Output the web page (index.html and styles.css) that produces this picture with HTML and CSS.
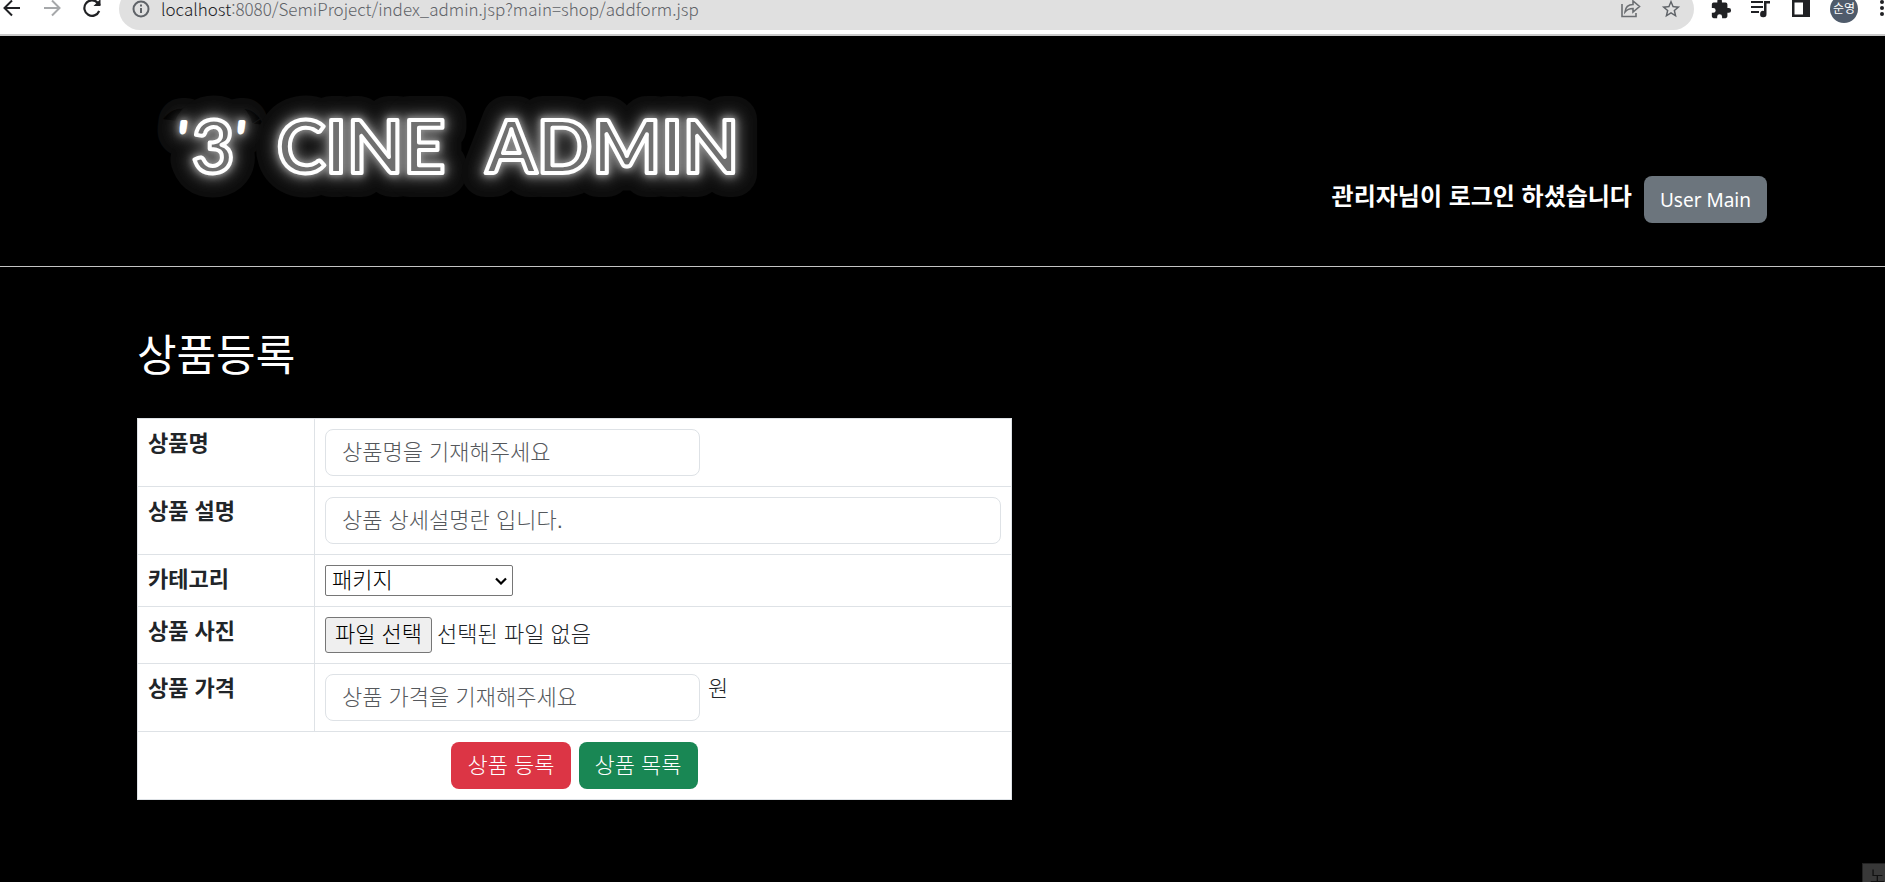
FILE: index.html
```html
<!DOCTYPE html>
<html lang="ko">
<head>
<meta charset="utf-8">
<title>상품등록</title>
<link rel="stylesheet" href="styles.css">
</head>
<body>
<div class="browser-bar">
  <nav class="browser-nav">
    <button class="icon-btn" type="button" aria-label="뒤로"><svg width="24" height="24" viewBox="0 0 24 24" fill="none" stroke="#202124" stroke-width="2"><path d="M20 11H5M12 3.500 4.500 11l7.500 7.500"/></svg></button>
    <button class="icon-btn" type="button" aria-label="앞으로"><svg width="24" height="24" viewBox="0 0 24 24" fill="none" stroke="#a6a8aa" stroke-width="2"><path d="M4 11h15M12 3.500l7.500 7.500-7.500 7.500"/></svg></button>
    <button class="icon-btn" type="button" aria-label="새로고침"><svg width="24" height="24" viewBox="0 0 24 24" fill="none" stroke="#202124" stroke-width="2.200"><path d="M19.200 14A7.700 7.700 0 1 1 17.500 5.600L20 8"/><path d="M20.500 2v7h-7z" fill="#202124" stroke="none"/></svg></button>
  </nav>
  <div class="address">
    <svg width="20" height="20" viewBox="0 0 20 20" fill="none" stroke="#5f6368" stroke-width="2"><circle cx="10" cy="10" r="7.500"/><path d="M10 9v5M10 5.500v2"/></svg>
    <span class="url"><span class="host">localhost</span>:8080/SemiProject/index_admin.jsp?main=shop/addform.jsp</span>
    <button class="icon-btn" type="button" aria-label="공유"><svg width="22" height="22" viewBox="0 0 22 22" fill="none" stroke="#6b6e72" stroke-width="1.600"><path d="M2 6v12.500h14V15"/><path d="M5 14c.5-5 3-7.500 8-7.500V3l6.500 5.500L13 14v-3.500c-4 0-6 1-8 3.500z"/></svg></button>
    <button class="icon-btn" type="button" aria-label="북마크"><svg width="22" height="22" viewBox="0 0 24 24" fill="#5f6368"><path d="M22 9.240l-7.190-.62L12 2 9.190 8.630 2 9.240l5.460 4.730L5.820 21 12 17.270 18.180 21l-1.630-7.030L22 9.240zM12 15.400l-3.760 2.270 1-4.280-3.320-2.880 4.380-.38L12 6.100l1.710 4.040 4.380.38-3.320 2.880 1 4.280L12 15.400z"/></svg></button>
  </div>
  <div class="browser-tools">
    <button class="icon-btn" type="button" aria-label="확장 프로그램"><svg width="22" height="22" viewBox="0 0 24 24" fill="#202124"><path d="M20.500 11H19V7a2 2 0 0 0-2-2h-4V3.500a2.500 2.500 0 0 0-5 0V5H4a2 2 0 0 0-2 2v3.800h1.500a2.700 2.700 0 0 1 0 5.400H2V20a2 2 0 0 0 2 2h3.800v-1.500a2.700 2.700 0 0 1 5.400 0V22H17a2 2 0 0 0 2-2v-4h1.500a2.500 2.500 0 0 0 0-5z"/></svg></button>
    <button class="icon-btn" type="button" aria-label="미디어"><svg width="22" height="22" viewBox="0 0 22 22"><path d="M1 4h12M1 9h12M1 14h8" stroke="#202124" stroke-width="2"/><path d="M14 13V3h6v2.500h-3.500V16a3.200 3.200 0 1 1-2.500-3z" fill="#202124"/></svg></button>
    <button class="icon-btn" type="button" aria-label="사이드 패널"><svg width="22" height="22" viewBox="0 0 22 22"><path d="M2 2h18v17H2zM4.500 4.500v12H13v-12z" fill="#202124" fill-rule="evenodd"/></svg></button>
    <button class="avatar" type="button">순영</button>
    <button class="icon-btn menu-dots" type="button" aria-label="메뉴"><svg width="6" height="22" viewBox="0 0 6 22" fill="#202124"><circle cx="3" cy="4" r="2"/><circle cx="3" cy="10" r="2"/><circle cx="3" cy="16" r="2"/></svg></button>
  </div>
</div>

<header class="site-header">
  <svg class="logo" width="602" height="105" viewBox="0 0 602 105" role="img" aria-label="'3' CINE ADMIN">
    <defs>
      <filter id="glow-wide" x="-10%" y="-50%" width="120%" height="200%"><feGaussianBlur stdDeviation="7"/></filter>
      <filter id="glow-near" x="-10%" y="-50%" width="120%" height="200%"><feGaussianBlur stdDeviation="3"/></filter>
    </defs>
    <g class="logo-halo"><use href="#logo-word"/></g>
    <g class="logo-glow-wide"><use href="#logo-word"/></g>
    <g class="logo-glow-near"><use href="#logo-word"/></g>
    <g class="logo-tube">
      <g id="logo-word">
        <text class="logo-quote" x="13" y="57">'</text>
        <text x="27" y="79">3</text>
        <text class="logo-quote" x="71" y="57">'</text>
        <text x="112" y="79">CINE</text>
        <text x="321" y="79">ADMIN</text>
      </g>
    </g>
  </svg>
  <div class="account">
    <b class="greeting">관리자님이 로그인 하셨습니다</b>
    <button class="btn btn-secondary" type="button">User Main</button>
  </div>
</header>

<main class="content">
  <h1>상품등록</h1>
  <form>
    <table class="product-table">
      <tbody>
        <tr>
          <th scope="row"><label for="name">상품명</label></th>
          <td><input class="field field-short" id="name" type="text" placeholder="상품명을 기재해주세요"></td>
        </tr>
        <tr>
          <th scope="row"><label for="detail">상품 설명</label></th>
          <td><input class="field" id="detail" type="text" placeholder="상품 상세설명란 입니다."></td>
        </tr>
        <tr>
          <th scope="row"><label for="category">카테고리</label></th>
          <td>
            <div class="category-box">
              <select class="category" id="category"><option>패키지</option></select>
              <svg class="category-arrow" width="12" height="8" viewBox="0 0 12 8" fill="none" stroke="#000" stroke-width="2.200"><path d="M1 1.500l5 5 5-5"/></svg>
            </div>
          </td>
        </tr>
        <tr>
          <th scope="row">상품 사진</th>
          <td>
            <div class="file-row">
              <input class="file-input" id="photo" type="file">
              <label class="file-button" for="photo">파일 선택</label>
              <span>선택된 파일 없음</span>
            </div>
          </td>
        </tr>
        <tr>
          <th scope="row"><label for="price">상품 가격</label></th>
          <td>
            <div class="price-row">
              <input class="field field-short" id="price" type="text" placeholder="상품 가격을 기재해주세요">
              <span>원</span>
            </div>
          </td>
        </tr>
        <tr>
          <td colspan="2">
            <div class="actions">
              <button class="btn btn-danger" type="submit">상품 등록</button>
              <button class="btn btn-success" type="button">상품 목록</button>
            </div>
          </td>
        </tr>
      </tbody>
    </table>
  </form>
</main>
<div class="corner-tip">노</div>
</body>
</html>
```
FILE: styles.css
```css
* { box-sizing: border-box; }

body {
  margin: 0;
  background: #000;
  color: #212529;
  font: 300 22px/30px "Liberation Sans", "Noto Sans CJK KR", sans-serif;
}

button, input, select { font: inherit; }

/* browser toolbar */
.browser-bar {
  display: flex;
  height: 36px;
  overflow: hidden;
  background: #fff;
  border-bottom: 2px solid #c9c9c9;
}

.browser-nav,
.address,
.browser-tools {
  display: flex;
  align-items: center;
  height: 42px;
  margin-top: -12px;
  flex: none;
}

.browser-nav { width: 119px; gap: 16px; }

.icon-btn {
  display: flex;
  padding: 0;
  border: 0;
  background: none;
}

.address {
  flex: 1;
  min-width: 0;
  gap: 18px;
  padding: 0 12px;
  border-radius: 21px;
  background: #e0e0e0;
}

.url {
  flex: 1;
  min-width: 0;
  margin-left: -8px;
  white-space: nowrap;
  color: #5f6368;
  font-family: "Liberation Sans", "Noto Sans CJK KR", sans-serif;
  font-family: "Noto Sans CJK KR", sans-serif;
  font-size: 17px;
  line-height: 18px;
}

.host { color: #202124; }

.browser-tools { padding-left: 16px; gap: 18px; }
.menu-dots { margin-left: 3px; }

.avatar {
  width: 28px;
  height: 28px;
  padding: 0;
  border: 0;
  border-radius: 50%;
  background: #4f5b6b;
  color: #fff;
  font-size: 12px;
  font-weight: 400;
  line-height: 26px;
}

/* site header */
.site-header {
  display: flex;
  justify-content: space-between;
  padding: 58px 118px 43px 165px;
  border-bottom: 1px solid #c4c4c4;
}

.logo { overflow: visible; flex: none; }

.logo text {
  font-family: Lato, sans-serif;
  font-size: 73px;
  font-weight: 700;
}

.logo .logo-quote {
  font-size: 40px;
  font-style: italic;
  font-weight: 400;
}

.logo g { stroke-linejoin: round; }
.logo-halo { fill: #0d0d0d; stroke: #0d0d0d; stroke-width: 48px; }
.logo-glow-wide { fill: #666; stroke: #666; stroke-width: 12px; filter: url(#glow-wide); }
.logo-glow-near { fill: #888; stroke: #999; stroke-width: 5px; filter: url(#glow-near); }
.logo-tube { fill: #707070; stroke: #fff; stroke-width: 4px; }

.account {
  display: flex;
  align-items: flex-end;
  gap: 12px;
  margin-top: 82px;
  height: 47px;
}

.greeting {
  color: #fff;
  font-size: 24px;
  font-weight: 700;
  line-height: 52px;
}

.btn {
  height: 47px;
  padding: 0 16px;
  border: 0;
  border-radius: 8px;
  color: #fff;
}

.btn-secondary {
  background: #6c757d;
  font-family: "Noto Sans", sans-serif;
  font-size: 19px;
  font-weight: 400;
}

.btn-danger { background: #dc3545; }
.btn-success { background: #198754; }

/* product form */
.content { padding: 62px 137px 0; }

h1 {
  height: 52px;
  margin: 0 0 37px;
  color: #fff;
  font-size: 43px;
  font-weight: 400;
  line-height: 54px;
}

.product-table {
  width: 875px;
  border-collapse: collapse;
  background: #fff;
}

.product-table th,
.product-table td {
  padding: 10px;
  border: 1px solid #dee2e6;
  text-align: left;
  vertical-align: top;
}

.product-table th {
  width: 177px;
  padding-bottom: 8px;
  font-weight: 700;
}

.field {
  display: block;
  width: 100%;
  height: 47px;
  padding: 0 16px;
  border: 1px solid #dee2e6;
  border-radius: 8px;
  background: #fff;
  color: #212529;
}

.field-short { width: 375px; }
.field::placeholder { color: #55585c; opacity: 1; }

.category-box { position: relative; width: 188px; }

.category {
  display: block;
  width: 100%;
  height: 31px;
  padding: 0 6px;
  border: 1px solid #767676;
  border-radius: 2px;
  appearance: none;
  background: #fff;
  color: #000;
  line-height: 28px;
}

.category-arrow {
  position: absolute;
  top: 12px;
  right: 6px;
  pointer-events: none;
}

.file-row,
.price-row,
.actions { display: flex; }

.file-row { position: relative; align-items: center; gap: 5px; }

.file-input {
  position: absolute;
  width: 106px;
  height: 36px;
  opacity: 0;
}

.file-button {
  height: 36px;
  padding: 0 9px;
  border: 1px solid #767676;
  border-radius: 3px;
  background: #efefef;
  color: #000;
  line-height: 34px;
}

.price-row { gap: 8px; }
.actions { justify-content: center; gap: 8px; }

.corner-tip {
  position: fixed;
  right: 0;
  bottom: 0;
  width: 23px;
  height: 19px;
  padding-left: 7px;
  border: solid #222;
  border-width: 1px 0 0 1px;
  background: #383838;
  color: #111;
  font-size: 16px;
  font-weight: 400;
  line-height: 26px;
}
```
